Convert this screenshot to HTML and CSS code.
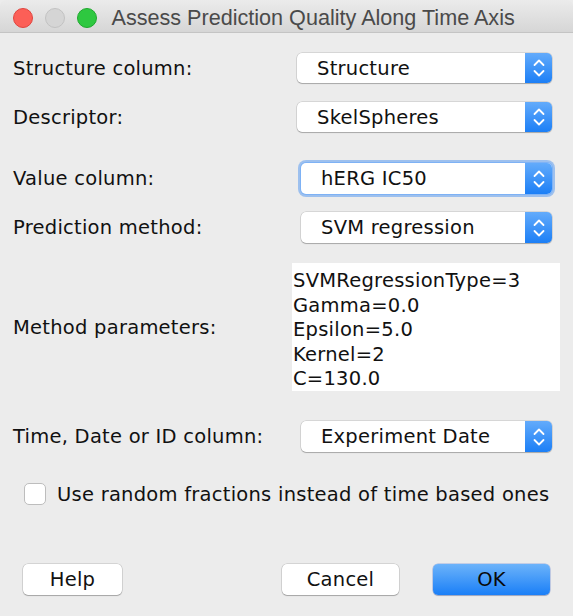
FILE: index.html
```html
<!DOCTYPE html>
<html lang="en">
<head>
<meta charset="utf-8">
<title>Assess Prediction Quality Along Time Axis</title>
<link rel="stylesheet" href="styles.css">
</head>
<body>
<div class="window">
  <div class="titlebar">
    <div class="lights">
      <span class="light red"></span>
      <span class="light grey"></span>
      <span class="light green"></span>
    </div>
    <div class="title">Assess Prediction Quality Along Time Axis</div>
  </div>
  <div class="content">
    <div class="row r1">
      <div class="label">Structure column:</div>
      <div class="select">
        <span class="value">Structure</span>
        <span class="stepper"><svg width="12" height="20" viewBox="0 0 12 20"><polyline points="1.5,7 6,2.5 10.5,7"/><polyline points="1.5,13 6,17.5 10.5,13"/></svg></span>
      </div>
    </div>
    <div class="row r2">
      <div class="label">Descriptor:</div>
      <div class="select">
        <span class="value">SkelSpheres</span>
        <span class="stepper"><svg width="12" height="20" viewBox="0 0 12 20"><polyline points="1.5,7 6,2.5 10.5,7"/><polyline points="1.5,13 6,17.5 10.5,13"/></svg></span>
      </div>
    </div>
    <div class="row r3">
      <div class="label">Value column:</div>
      <div class="select inset focused">
        <span class="value">hERG IC50</span>
        <span class="stepper"><svg width="12" height="20" viewBox="0 0 12 20"><polyline points="1.5,7 6,2.5 10.5,7"/><polyline points="1.5,13 6,17.5 10.5,13"/></svg></span>
      </div>
    </div>
    <div class="row r4">
      <div class="label">Prediction method:</div>
      <div class="select inset">
        <span class="value">SVM regression</span>
        <span class="stepper"><svg width="12" height="20" viewBox="0 0 12 20"><polyline points="1.5,7 6,2.5 10.5,7"/><polyline points="1.5,13 6,17.5 10.5,13"/></svg></span>
      </div>
    </div>
    <div class="row r5">
      <div class="label">Method parameters:</div>
      <div class="params">
        <div>SVMRegressionType=3</div>
        <div>Gamma=0.0</div>
        <div>Epsilon=5.0</div>
        <div>Kernel=2</div>
        <div>C=130.0</div>
      </div>
    </div>
    <div class="row r6">
      <div class="label">Time, Date or ID column:</div>
      <div class="select inset">
        <span class="value">Experiment Date</span>
        <span class="stepper"><svg width="12" height="20" viewBox="0 0 12 20"><polyline points="1.5,7 6,2.5 10.5,7"/><polyline points="1.5,13 6,17.5 10.5,13"/></svg></span>
      </div>
    </div>
    <div class="check-row">
      <span class="checkbox"></span>
      <span class="check-label">Use random fractions instead of time based ones</span>
    </div>
    <div class="buttons">
      <div class="btn help">Help</div>
      <div class="spacer"></div>
      <div class="btn cancel">Cancel</div>
      <div class="btn ok">OK</div>
    </div>
  </div>
</div>
</body>
</html>
```
FILE: styles.css
```css
html, body {
  margin: 0;
  padding: 0;
  background: #ececec;
}
body {
  width: 573px;
  height: 616px;
  overflow: hidden;
  font-family: "DejaVu Sans", "Liberation Sans", sans-serif;
  font-size: 19.5px;
  letter-spacing: 0.25px;
  color: #111;
}
.window {
  background: #ececec;
  height: 616px;
}
.titlebar {
  height: 33px;
  box-sizing: border-box;
  border-bottom: 1px solid #c4c4c4;
  background: linear-gradient(#ebebeb, #d6d6d6);
  display: flex;
  align-items: center;
  border-radius: 6px 6px 0 0;
}
.lights {
  display: flex;
  gap: 12px;
  padding-left: 12.5px;
  padding-top: 3px;
}
.light {
  width: 20px;
  height: 20px;
  box-sizing: border-box;
  border-radius: 50%;
  display: block;
}
.light.red { background: #fc5f57; border: 1px solid #e0443e; }
.light.grey { background: #d5d5d5; border: 1px solid #c2c2c2; }
.light.green { background: #2ec840; border: 1px solid #1fa82e; }
.title {
  margin-left: 15px;
  padding-top: 3px;
  font-family: "Liberation Sans", "Helvetica", sans-serif;
  font-size: 21.6px;
  letter-spacing: 0;
  color: #4a4a4a;
  white-space: nowrap;
}
.content {
  padding-left: 13px;
}
.row {
  display: flex;
  align-items: center;
}
.label {
  width: 284px;
  flex: none;
  white-space: nowrap;
}
.r1 { margin-top: 20px; }
.r2 { margin-top: 19px; }
.r3 { margin-top: 31px; }
.r4 { margin-top: 18px; }
.r5 { margin-top: 20px; }
.r6 { margin-top: 30px; }
.select {
  width: 255px;
  height: 30px;
  box-sizing: border-box;
  background: #fff;
  border-radius: 5px;
  box-shadow: 0 0 0 0.5px rgba(0,0,0,0.18), 0 1px 1px rgba(0,0,0,0.22);
  display: flex;
  align-items: center;
  overflow: hidden;
}
.select.inset {
  width: 251px;
  margin-left: 4px;
  height: 31px;
}
.select.focused {
  box-shadow: 0 0 0 1px #7eb2f5, 0 0 0 3px rgba(92,156,240,0.55);
}
.value {
  flex: 1;
  padding-left: 20px;
  white-space: nowrap;
}
.stepper {
  width: 27px;
  height: 100%;
  background: linear-gradient(#63abfb, #1c7ff6);
  display: flex;
  align-items: center;
  justify-content: center;
}
.stepper svg {
  display: block;
}
.stepper polyline {
  fill: none;
  stroke: #fff;
  stroke-width: 1.8;
  stroke-linecap: round;
  stroke-linejoin: round;
}
.params {
  margin-left: -5px;
  width: 268px;
  height: 128px;
  box-sizing: border-box;
  background: #fff;
  padding: 6px 0 0 1px;
  line-height: 24.6px;
  white-space: nowrap;
}
.check-row {
  display: flex;
  align-items: center;
  margin-top: 29px;
  padding-left: 11px;
}
.checkbox {
  width: 22px;
  height: 22px;
  box-sizing: border-box;
  background: #fff;
  border: 1px solid #bdbdbd;
  border-radius: 5px;
  margin-right: 11px;
  display: block;
}
.check-label {
  white-space: nowrap;
  padding-top: 2px;
}
.buttons {
  display: flex;
  margin-top: 58px;
  padding-left: 10px;
}
.spacer {
  width: 160px;
}
.btn {
  height: 31px;
  box-sizing: border-box;
  background: #fff;
  border-radius: 5px;
  box-shadow: 0 0 0 0.5px rgba(0,0,0,0.2), 0 1px 1px rgba(0,0,0,0.22);
  display: flex;
  align-items: center;
  justify-content: center;
}
.btn.help { width: 99px; }
.btn.cancel { width: 117px; }
.btn.ok {
  width: 117px;
  margin-left: 34px;
  background: linear-gradient(#6cb3fa, #1a7ff7);
  box-shadow: 0 0 0 0.5px rgba(0,60,200,0.35), 0 1px 1px rgba(0,0,0,0.2);
  color: #0a0a0a;
}
```
